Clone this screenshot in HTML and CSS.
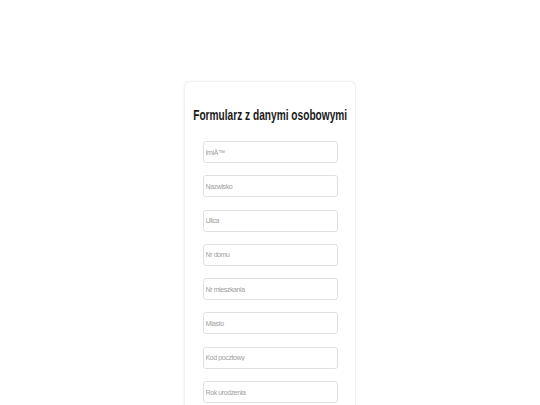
FILE: index.html
```html
<!DOCTYPE html>
<html lang="pl">
<head>
<meta charset="utf-8">
<title>Formularz</title>
<link rel="stylesheet" href="styles.css">
</head>
<body>
<div class="card">
  <h1 class="title"><span class="title-text">Formularz z danymi osobowymi</span></h1>
  <form class="form">
    <input class="field" type="text" placeholder="ImiÄ™">
    <input class="field" type="text" placeholder="Nazwisko">
    <input class="field" type="text" placeholder="Ulica">
    <input class="field" type="text" placeholder="Nr domu">
    <input class="field" type="text" placeholder="Nr mieszkania">
    <input class="field" type="text" placeholder="Miasto">
    <input class="field" type="text" placeholder="Kod pocztowy">
    <input class="field" type="text" placeholder="Rok urodzenia">
  </form>
</div>
</body>
</html>
```

FILE: styles.css
```css
html, body {
  margin: 0;
  padding: 0;
  background: #ffffff;
  font-family: "Liberation Sans", Arial, sans-serif;
}

body {
  height: 405px;
  overflow: hidden;
}

.card {
  width: 170px;
  margin: 82px auto 0;
  padding: 25px 0 20px;
  box-sizing: border-box;
  background: #ffffff;
  border-radius: 5px;
  box-shadow: 0 0 3px rgba(0, 0, 0, 0.16);
}

.title {
  display: flex;
  justify-content: center;
  margin: 0 0 17px;
  font-size: 14px;
  line-height: 17px;
  font-weight: bold;
  color: #1a1a1a;
  white-space: nowrap;
}

.title-text {
  display: block;
  flex: none;
  transform: scaleX(0.725);
}

.form {
  display: flex;
  flex-direction: column;
  align-items: center;
}

.field {
  display: block;
  width: 135px;
  height: 22px;
  margin: 0 0 12.3px;
  padding: 0 2px;
  box-sizing: border-box;
  border: 1px solid #e0e0e0;
  border-radius: 3px;
  background: #ffffff;
  font-family: "Liberation Sans", Arial, sans-serif;
  font-size: 7px;
  letter-spacing: -0.4px;
  color: #333;
  outline: none;
}

.field::placeholder {
  color: #a0a0a0;
}
```
